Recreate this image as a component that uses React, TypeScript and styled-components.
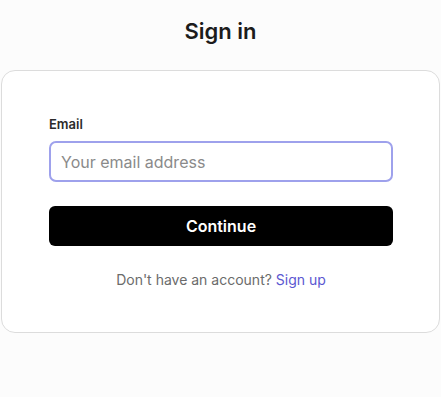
import styled, { createGlobalStyle } from "styled-components";

const GlobalStyle = createGlobalStyle`
  html, body {
    margin: 0;
    padding: 0;
    background: #fcfcfc;
    font-family: Inter, "Noto Sans", sans-serif;
    color: #1a1a1a;
  }
  * {
    box-sizing: border-box;
  }
`;

const Page = styled.main`
  display: flex;
  flex-direction: column;
  align-items: center;
  padding: 17px 1px 0;
`;

const Title = styled.h1`
  margin: 0 0 25px;
  font-size: 22px;
  line-height: 28px;
  font-weight: 600;
  color: #1c1c1c;
`;

const Card = styled.section`
  width: 100%;
  background: #ffffff;
  border: 1px solid #dcdcdc;
  border-radius: 14px;
  padding: 45px 46px 42px 47px;
  display: flex;
  flex-direction: column;
`;

const Field = styled.label`
  display: flex;
  flex-direction: column;
  gap: 9px;
`;

const Label = styled.span`
  font-size: 13px;
  line-height: 16px;
  font-weight: 600;
  color: #2b2b2b;
`;

const Input = styled.input`
  height: 41px;
  border: 2px solid #9ea1ec;
  border-radius: 7px;
  padding: 0 10px;
  font-family: inherit;
  font-size: 16px;
  color: #1c1c1c;
  outline: none;
  &::placeholder {
    color: #8a8a8a;
  }
`;

const Button = styled.button`
  margin-top: 24px;
  height: 40px;
  border: none;
  border-radius: 6px;
  background: #000000;
  color: #ffffff;
  font-family: inherit;
  font-size: 16px;
  font-weight: 600;
  cursor: pointer;
`;

const Footer = styled.p`
  margin: 24px 0 0;
  text-align: center;
  font-size: 14px;
  line-height: 20px;
  color: #6b6b6b;
`;

const Link = styled.a`
  color: #5b57d1;
  text-decoration: none;
`;

export default function App() {
  return (
    <>
      <GlobalStyle />
      <Page>
        <Title>Sign in</Title>
        <Card>
          <Field>
            <Label>Email</Label>
            <Input type="email" placeholder="Your email address" />
          </Field>
          <Button type="button">Continue</Button>
          <Footer>
            Don't have an account? <Link href="#">Sign up</Link>
          </Footer>
        </Card>
      </Page>
    </>
  );
}
